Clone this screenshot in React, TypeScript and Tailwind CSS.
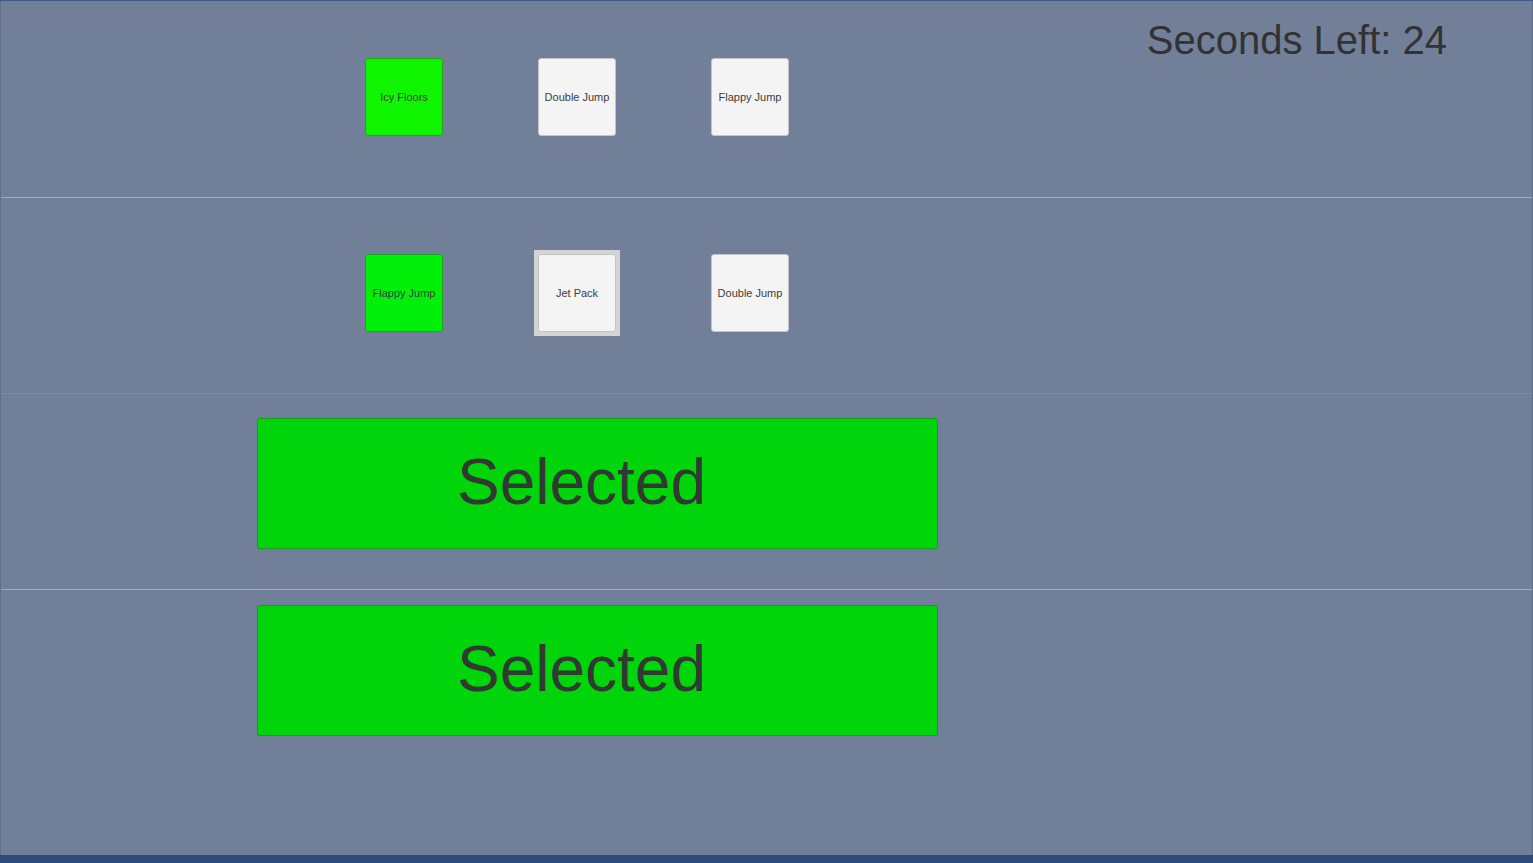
import React from "react";

const font = { fontFamily: '"Liberation Sans", Arial, sans-serif' };

function Small({ label, green, shade }: { label: string; green?: boolean; shade?: string }) {
  const bg = green ? (shade === "b" ? "bg-[#00f00a] border-[#1fa21f]" : "bg-[#0ff500] border-[#25a51a]") : "bg-[#f4f4f4] border-[#c4c4c8]";
  return (
    <div
      className={`w-[78px] h-[78px] shrink-0 rounded-[3px] border flex items-center justify-center text-[11px] text-[#3c3c3c] ${bg}`}
    >
      {label}
    </div>
  );
}

function Big() {
  return (
    <div className="ml-[256px] w-[681px] h-[131px] rounded-[2px] border border-[#1c9c1c] bg-[#00d40a] flex items-center justify-center pr-[32px] pb-[4px] text-[64px] leading-none text-[#303a30]">
      Selected
    </div>
  );
}

export default function App() {
  return (
    <div style={font} className="w-[1533px] h-[863px] overflow-hidden bg-[#717f99] flex flex-col">
      <div className="h-[1px] bg-[#3e5988]" />
      <div className="flex-1 flex flex-col border-l border-r border-[#5f6e8b]">
        <div className="h-[196px] flex items-start">
          <div className="pt-[57px] pl-[364px] flex gap-[95px]">
            <Small label="Icy Floors" green />
            <Small label="Double Jump" />
            <Small label="Flappy Jump" />
          </div>
          <div className="ml-auto mr-[85px] mt-[9px] text-[40px] text-[#323232]">Seconds Left: 24</div>
        </div>
        <div className="h-[1px] bg-[#a4abb9]" />
        <div className="h-[195px]">
          <div className="pt-[52px] pl-[364px] flex items-center gap-[91px]">
            <Small label="Flappy Jump" green shade="b" />
            <div className="p-[4px] bg-[#d4d4d7]">
              <Small label="Jet Pack" />
            </div>
            <Small label="Double Jump" />
          </div>
        </div>
        <div className="h-[1px] bg-[#7d8aa1]" />
        <div className="h-[195px] pt-[24px]">
          <Big />
        </div>
        <div className="h-[1px] bg-[#a4abb9]" />
        <div className="flex-1 pt-[15px]">
          <Big />
        </div>
      </div>
      <div className="h-[8px] bg-[#2e4a76]" />
    </div>
  );
}
